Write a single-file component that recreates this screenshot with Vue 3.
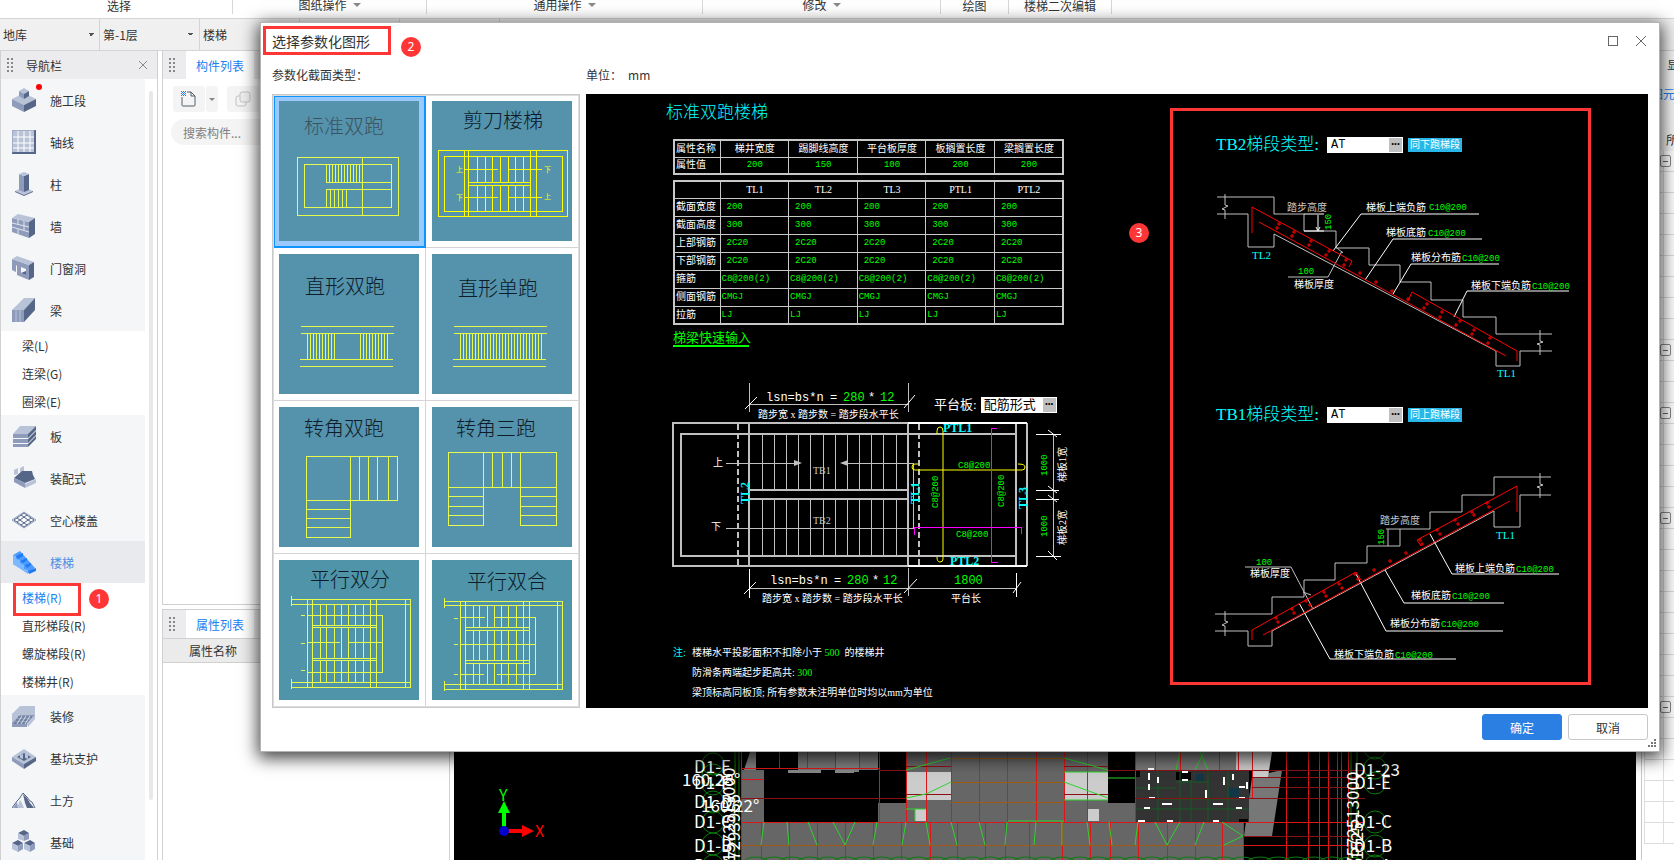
<template>
  <div class="app">
    <!-- Ribbon -->
    <header class="ribbon">
      <div v-for="g in ribbonGroups" :key="g.label" class="ribbon-group" :class="{ menu: g.menu }">
        <span>{{ g.label }}</span>
        <i v-if="g.menu" class="caret"></i>
      </div>
    </header>

    <div class="selector-bar">
      <select v-for="s in selectors" :key="s" class="selector" :aria-label="s">
        <option>{{ s }}</option>
      </select>
      <span class="selector-blank"></span>
      <span class="selector-blank"></span>
      <span class="selector-rest"></span>
    </div>

    <div class="workspace">
      <!-- Navigation -->
      <nav class="nav">
        <div class="panel-head">
          <i class="grip"></i>
          <span class="nav-title">导航栏</span>
          <button class="icon-button" aria-label="关闭导航栏">
            <svg width="10" height="10" viewBox="0 0 10 10"><path d="M1 1L9 9M9 1L1 9" stroke="#8a8a8a" fill="none" /></svg>
          </button>
        </div>
        <div class="nav-body">
          <div class="nav-list">
            <template v-for="item in navItems" :key="item.name">
              <button class="nav-item" :class="{ active: item.active }">
                <svg class="nav-icon" viewBox="0 0 24 24">
                  <path v-for="(p, i) in item.icon" :key="i" :d="p[1]" :fill="p[2] ? 'none' : p[0]" :stroke="p[2] ? p[0] : 'none'" :stroke-width="p[2]" />
                </svg>
                <span>{{ item.name }}</span>
                <i v-if="item.dot" class="red-dot"></i>
              </button>
              <div v-if="item.children" class="nav-children">
                <button v-for="(c, i) in item.children" :key="c" class="nav-child" :class="{ chosen: item.active && i === 0 }">
                  {{ c }}
                </button>
                <template v-if="item.active">
                  <i class="mark-box"></i>
                  <b class="badge badge-one">1</b>
                </template>
              </div>
            </template>
          </div>
          <i class="nav-scroll"></i>
        </div>
      </nav>

      <!-- Component and property lists -->
      <div class="side-panels">
        <section class="panel panel-top">
          <div class="panel-head">
            <i class="grip"></i>
            <button class="tab">构件列表</button>
          </div>
          <div class="list-tools">
            <button class="tool" aria-label="新建">
              <svg width="18" height="18" viewBox="0 0 18 18">
                <path d="M2 7V15Q2 16 3 16H14Q15 16 15 15V6L11 2H7M11 2V6H15" fill="none" stroke="#555c6a" />
                <path d="M1 1h1v1h-1zM3 1h1v1h-1zM5 1h1v1h-1zM2 2h1v1h-1zM4 2h1v1h-1zM1 3h1v1h-1zM3 3h1v1h-1zM5 3h1v1h-1zM2 4h1v1h-1zM4 4h1v1h-1zM1 5h1v1h-1zM3 5h1v1h-1zM5 5h1v1h-1z" fill="#1f7bf0" />
              </svg>
            </button>
            <button class="tool tool-narrow" aria-label="新建选项"><i class="caret"></i></button>
            <button class="tool tool-copy" aria-label="复制">
              <svg width="18" height="18" viewBox="0 0 18 18">
                <rect x="2" y="6" width="10" height="10" rx="2" fill="none" stroke="#c2c2c2" />
                <rect x="6" y="2" width="10" height="10" rx="2" fill="#eee" stroke="#c2c2c2" />
              </svg>
            </button>
          </div>
          <input class="search" type="text" placeholder="搜索构件..." aria-label="搜索构件" />
        </section>
        <section class="panel panel-bottom">
          <div class="panel-head">
            <i class="grip"></i>
            <button class="tab">属性列表</button>
          </div>
          <div class="prop-head">属性名称</div>
        </section>
      </div>

      <!-- Model view -->
      <main class="viewport">
        <svg class="model" viewBox="454 752 1182 108" preserveAspectRatio="xMinYMax meet">
          <g fill="#666">
            <path d="M741 770H764V822H741ZM741 822H1156V860H741ZM1156 822H1243V860H1156ZM878 803H906V822H878ZM906 752H1108V822H906ZM1108 803H1135V822H1108Z" />
            <path d="M750 752H756V770H744ZM835 752H859V772H835Z" fill="#808080" />
            <path d="M798 752H835V770H798ZM859 752H878V770H859ZM1135 752H1238V770H1135ZM1252 777L1282 770L1272 836H1244Z" fill="#777" />
            <path d="M788 770H804V773H788ZM804 770H821V773H804ZM835 770H854V773H835Z" fill="#888" />
            <path d="M906 772H951V800H906ZM1064 772H1108V800H1064ZM915 809H926V821H915ZM1088 809H1099V821H1088ZM1236 752H1272L1268 777H1252V770H1236Z" fill="#ccc" />
          </g>
          <path d="M1135 770H1249V823H1135Z" fill="#333" />
          <path d="M1135 771H1140V777H1135ZM1176 772H1191V780H1176ZM1239 819H1248V822H1239Z" fill="#000" />
          <path d="M1196 774H1204V781H1196ZM1228 788H1239V797H1228Z" fill="#123848" />
          <path d="M1158 770V823M1180 770V823M1191 780V823M1208 770V823M1228 770V823M1135 788H1176M1158 799H1239M1135 809H1249M1176 782H1208" stroke="#175a22" fill="none" />
          <path d="M1148 769h6M1149 773v7M1158 777v6M1149 784v6M1149 798h6M1182 772h6M1182 780h6M1206 790v8M1224 777v8M1233 774v6M1239 787h6M1247 782v7M1239 798h6M1144 808h6M1162 804h10M1213 804h10M1236 808h6M1138 821h7M1167 821h6M1213 821h6" stroke="#fff" stroke-width="2" />
          <g fill="none" stroke="#e0151a" shape-rendering="crispEdges">
            <path d="M741 752V860M779 752V768M807 752V768M835 752V770M859 752V768M879 752V822M906 752V822M926 752V822M951 752V822M979 752V822M1007 752V822M1036 752V822M1064 752V822M1087 752V822M1135 752V822M1155 752V770M1180 752V770M1219 752V770M1238 752V770M1252 752V798" />
            <path d="M761 822V860M789 822V860M817 822V860M845 822V860M873 822V860M901 822V860M930 822V860M957 822V860M985 822V860M1005 822V860M1029 822V860M1062 822V860M1090 822V860M1110 822V860M1138 822V860M1167 822V860M1195 822V860M1222 822V860M1243 822V860" />
            <path d="M741 768H879M741 779H764M741 822H1365M741 845H1365" />
            <path d="M1286 752V860M1308 752V860M1319 752V860M1328 752V860M1337 752V860M1341 752V860M1348 752V860" />
            <path d="M741 798H906M879 770H906M906 766H951M906 794H951M1064 766H1108M1064 794H1108M1108 770H1365M1252 777H1365M1252 787H1365M1135 798H1365M1243 836H1365" stroke="#8a1014" />
            <path d="M951 758H1064M951 782H1064M951 802H1064M741 845H1243" stroke="#a05a14" />
          </g>
          <path d="M906 770L950 758M906 798L926 794L951 782M906 809H926M915 809V821M1064 758L1108 770M1064 772H1108M1064 782L1108 798M1064 800H1108M1108 778H1135M1008 821H1064M764 822L761 845M787 822L789 845M808 822L817 845M833 822L845 845L855 822M877 822L873 845M906 822L902 845M926 822L930 845M951 822L957 845M979 822L985 845M1007 822L1005 845M1036 822L1034 845M1062 822L1062 845M1087 822L1090 845M1109 822L1112 845M1138 822L1135 845M1155 822L1167 845L1180 822M1204 822L1195 845M1222 822L1243 836L1224 845M1200 752L1208 770M1180 752L1176 770M1204 752L1195 770" fill="none" stroke="#2fd22f" />
          <g fill="none" stroke="#0a7d0a">
            <ellipse v-for="n in 34" :key="n" :cx="738 + n * 18" cy="863" rx="13" ry="6" />
            <circle v-for="y in [764, 775, 784, 802, 822, 844, 866]" :key="'l' + y" cx="713" :cy="y" r="11" />
            <circle v-for="y in [748, 768, 783, 822, 846, 866]" :key="'r' + y" cx="1375" :cy="y" r="11" />
            <path d="M735 752V860M739 752V860M1351 752V860M1357 752V860" />
          </g>
          <g class="axis-text">
            <text v-for="t in axisLabels" :key="t[0] + t[1] + t[2]" :x="t[1]" :y="t[2]">{{ t[0] }}</text>
            <text transform="translate(735 862) rotate(-90)">1572513000</text>
            <text transform="translate(740 860) rotate(-90)">7293955</text>
            <text transform="translate(1359 866) rotate(-90)">7572513000</text>
            <text transform="translate(1363 860) rotate(-90)">1525</text>
          </g>
          <path d="M504 831V812" stroke="#0f0" stroke-width="4" />
          <path d="M498 813L504 801L510 813Z" fill="#0f0" />
          <path d="M504 831H523" stroke="#f00" stroke-width="4" />
          <path d="M522 825L534 831L522 837Z" fill="#f00" />
          <circle cx="504" cy="831" r="5" fill="#00c" />
          <text class="axis" x="499" y="801" fill="#0f0">Y</text>
          <text class="axis" x="535" y="837" fill="#f00">X</text>
        </svg>
      </main>

      <aside class="right-panel">
        <div class="right-title">显示</div>
        <div class="right-tab">图元</div>
        <div class="right-filter">所有</div>
        <div class="right-grid">
          <div v-for="n in 33" :key="n" class="right-row">
            <i v-if="[1, 10, 13, 18, 27].includes(n)" class="minus"></i>
          </div>
        </div>
      </aside>
    </div>

    <!-- Parametric shape dialog -->
    <div class="dialog" role="dialog" aria-labelledby="dialog-title">
      <div class="dialog-head">
        <h1 id="dialog-title">选择参数化图形</h1>
        <button class="icon-button" aria-label="最大化">
          <svg width="12" height="12" viewBox="0 0 12 12"><rect x="1" y="1" width="9" height="9" fill="none" stroke="#666" shape-rendering="crispEdges" /></svg>
        </button>
        <button class="icon-button" aria-label="关闭">
          <svg width="12" height="12" viewBox="0 0 12 12"><path d="M1 1L11 11M11 1L1 11" fill="none" stroke="#666" /></svg>
        </button>
        <i class="title-box"></i>
        <b class="badge badge-two">2</b>
      </div>
      <div class="dialog-labels">
        <span class="label-type">参数化截面类型：</span>
        <span>单位：</span>
        <span class="unit">mm</span>
      </div>

      <div class="dialog-content">
        <div class="shape-list">
          <button
            v-for="(s, i) in shapes"
            :key="s.name"
            class="shape"
            :class="{ selected: selected === i }"
            @click="selected = i"
          >
            <svg viewBox="0 0 140 140" width="140" height="140">
              <rect width="140" height="140" :fill="i > 5 ? '#4f94a8' : '#5592ac'" />
              <path :d="s.d" fill="none" :stroke="i === 1 ? '#ffff00' : '#e6fa50'" shape-rendering="crispEdges" />
              <text :x="s.x" :y="s.y" class="shape-name">{{ s.name }}</text>
              <text v-for="m in s.marks" :key="m.join()" :x="m[1]" :y="m[2]" class="shape-mark">{{ m[0] }}</text>
            </svg>
          </button>
        </div>

        <div class="canvas">
          <div class="canvas-left">
            <h2>标准双跑楼梯</h2>
            <table class="cad-table center">
              <tbody>
                <tr>
                  <th>属性名称</th>
                  <th v-for="h in propNames" :key="h">{{ h }}</th>
                </tr>
                <tr>
                  <th>属性值</th>
                  <td v-for="(v, i) in propValues" :key="i">{{ v }}</td>
                </tr>
              </tbody>
            </table>
            <table class="cad-table beams">
              <thead>
                <tr>
                  <th></th>
                  <th v-for="b in beams" :key="b">{{ b }}</th>
                </tr>
              </thead>
              <tbody>
                <tr v-for="(r, i) in beamRows" :key="r[0]" :class="{ tight: i > 3 }">
                  <th>{{ r[0] }}</th>
                  <td v-for="b in beams" :key="b">{{ r[1] }}</td>
                </tr>
              </tbody>
            </table>
            <a class="quick-link" href="#">梯梁快速输入</a>

            <div class="plan">
              <svg class="plan-svg cad" width="417" height="226" viewBox="23 10 417 226">
                <g fill="none" stroke="#c0c0c0" shape-rendering="crispEdges">
                  <path d="M258 53H23V196H258M366 64H31V186H366M366 53V196M377 53V196M99 53V196M258 53V196M99 120H258M99 129H258" stroke-width="2" />
                  <path d="M88 54V196M269 54V196" stroke-width="2" stroke-dasharray="6 3" />
                  <path :d="planSteps" />
                  <path d="M76 93H150M192 93H263V158H76" />
                  <path d="M99 13V42M258 13V42M99 34H258M258 198V226M99 218H366M403 64V186" />
                </g>
                <path d="M258 53H377M258 196H377" stroke="#fff" stroke-width="2" shape-rendering="crispEdges" />
                <path d="M144 90L152 93L144 96ZM198 90L190 93L198 96Z" fill="#c0c0c0" />
                <g fill="none" stroke="#fff">
                  <path d="M95 39L107 27M254 38L265 25M94 224L106 212M254 223L267 209M363 223L371 212M398 60L407 67M398 116L407 123M398 125L407 132M398 181L407 190" />
                  <path d="M99 199V228M366 203V227M386 64H411M386 120H409M386 129H409M386 186H411" shape-rendering="crispEdges" />
                </g>
                <path d="M287 64V61Q287 57 290 57Q293 57 293 61V189Q293 192 290 192Q287 192 287 187M268 94H265Q262 94 262 97Q262 100 265 100H372Q375 100 375 97Q375 94 368 94" fill="none" stroke="#ff0" />
                <path d="M347 58H341V192H348M264 165V157H371V164" fill="none" stroke="#f0f" shape-rendering="crispEdges" />
                <g class="formula">
                  <text x="116" y="31">lsn=bs*n</text><text x="180" y="31">=</text>
                  <text class="green" x="193" y="31">280</text><text x="218" y="31">*</text><text class="green" x="230" y="31">12</text>
                  <text x="120" y="214">lsn=bs*n</text><text x="184" y="214">=</text>
                  <text class="green" x="197" y="214">280</text><text x="222" y="214">*</text><text class="green" x="233" y="214">12</text>
                  <text class="green" x="304" y="214">1800</text>
                </g>
                <text x="108" y="48">踏步宽 x 踏步数 = 踏步段水平长</text>
                <text x="112" y="232">踏步宽 x 踏步数 = 踏步段水平长</text>
                <text x="301" y="232">平台长</text>
                <text x="63" y="96">上</text>
                <text x="61" y="160">下</text>
                <text class="dim" x="163" y="104">TB1</text>
                <text class="dim" x="163" y="154">TB2</text>
                <g class="cyan bold">
                  <text x="293" y="62">PTL1</text>
                  <text x="300" y="195">PTL2</text>
                  <text transform="translate(99 134) rotate(-90)">TL2</text>
                  <text transform="translate(269 134) rotate(-90)">TL1</text>
                  <text transform="translate(377 139) rotate(-90)">TL3</text>
                </g>
                <g class="green code">
                  <text x="308" y="98">C8@200</text>
                  <text x="306" y="167">C8@200</text>
                  <text transform="translate(288 138) rotate(-90)">C8@200</text>
                  <text transform="translate(354 137) rotate(-90)">C8@200</text>
                  <text transform="translate(397 106) rotate(-90)">1000</text>
                  <text transform="translate(397 167) rotate(-90)">1000</text>
                </g>
                <text transform="translate(416 112) rotate(-90)">梯板1宽</text>
                <text transform="translate(416 175) rotate(-90)">梯板2宽</text>
              </svg>
              <label class="plan-field">
                平台板:
                <span class="combo"><input type="text" value="配筋形式" /><button aria-label="选择配筋形式">•••</button></span>
              </label>
            </div>

            <div class="notes">
              <p><span class="note-mark">注:</span>楼梯水平投影面积不扣除小于 <em>500</em>&nbsp; 的楼梯井</p>
              <p><span class="note-mark"></span>防滑条两端起步距高共: <em>300</em></p>
              <p><span class="note-mark"></span>梁顶标高同板顶; 所有参数未注明单位时均以mm为单位</p>
            </div>
            <b class="badge badge-three">3</b>
          </div>

          <div class="canvas-right">
            <div v-for="f in flights" :key="f.code" class="flight">
              <div class="flight-head">
                <label :for="f.code">{{ f.code }}梯段类型:</label>
                <span class="combo"><input :id="f.code" class="mono" type="text" value="AT" /><button aria-label="选择梯段类型">•••</button></span>
                <button class="same">{{ f.same }}</button>
              </div>
              <svg class="cad" width="415" :height="f.h" :viewBox="'8 ' + f.top + ' 415 ' + f.h">
                <path :d="f.slab" fill="none" stroke="#c0c0c0" />
                <path :d="f.leaders" fill="none" stroke="#fff" />
                <path :d="f.bars" fill="none" stroke="#f00" />
                <path :d="crosses(f.dots)" fill="none" stroke="#f00" />
                <text v-for="l in f.labels" :key="l.join()" :x="l[1]" :y="l[2]" :class="l[3]">{{ l[0] }}</text>
                <text class="green code" :transform="'translate(' + f.rise + ') rotate(-90)'">150</text>
              </svg>
            </div>
          </div>
        </div>
      </div>

      <footer class="dialog-foot">
        <button class="primary">确定</button>
        <button>取消</button>
        <svg class="resizer" width="9" height="9" viewBox="0 0 9 9">
          <path d="M6 0h2v2h-2zM6 3h2v2h-2zM3 3h2v2h-2zM6 6h2v2h-2zM3 6h2v2h-2zM0 6h2v2h-2z" fill="#777" />
        </svg>
      </footer>
    </div>
  </div>
</template>

<script setup>
import { ref } from 'vue';

const selected = ref(0);

const ribbonGroups = [
  { label: '选择' },
  { label: '图纸操作', menu: true },
  { label: '通用操作', menu: true },
  { label: '修改', menu: true },
  { label: '绘图' },
  { label: '楼梯二次编辑' }
];
const selectors = ['地库', '第-1层', '楼梯'];

// --- Navigation tree, icons are [color, path, strokeWidth] ---
const L = '#b9c3d8';
const M = '#8e9bba';
const D = '#566688';
const navItems = [
  { name: '施工段', dot: true, icon: [[L, 'M0 11L12 5L24 11L12 17Z'], [M, 'M0 11L12 17V24L0 18Z'], [D, 'M24 11L12 17V24L24 18Z'], [L, 'M7 3L12 0L17 3L12 6Z'], [M, 'M7 3L12 6V11L7 8Z'], [D, 'M17 3L12 6V11L17 8Z']] },
  { name: '轴线', icon: [[L, 'M0 0H23V23H0Z'], ['#fff', 'M6 1V22M12 1V22M18 1V22M1 7H22M1 13H22M1 18H22', 1], [D, 'M23 0V23H0', 2], [M, 'M0 23V0H23', 1]] },
  { name: '柱', icon: [[L, 'M3 19L12 15L21 19L12 23Z'], [D, 'M3 19L12 23L21 19V20L12 24L3 20Z'], [M, 'M7 2L12 4V20L7 18Z'], [D, 'M17 2L12 4V20L17 18Z'], [L, 'M7 2L12 0L17 2L12 4Z']] },
  { name: '墙', icon: [[M, 'M0 4L17 8V24L0 18Z'], [L, 'M0 4L6 0L23 4L17 8Z'], [D, 'M17 8L23 4V20L17 24Z'], ['#dfe4ee', 'M0 9L17 13M0 13L17 18M6 5V10M12 11V16M6 15V20M12 7V11', 1]] },
  { name: '门窗洞', icon: [[M, 'M0 3L17 9V24L5 19V10L4 9V16L0 14ZM9 11V17L14 19V13Z'], [L, 'M0 3L5 0L22 6L17 9Z'], [D, 'M17 9L22 6V21L17 24ZM9 17L14 15V19Z']] },
  { name: '梁', icon: [[L, 'M0 12L12 0H23L12 12Z'], [M, 'M0 12H12V24H0Z'], [D, 'M12 12L23 0V12L12 24Z'], [L, 'M4 12V24M8 12V24', 1]], children: ['梁(L)', '连梁(G)', '圈梁(E)'] },
  { name: '板', icon: [[L, 'M1 10L8 2H24L16 10Z'], [M, 'M1 10H16V14H1ZM1 15H16V19H1ZM1 20H16V23H1Z'], [D, 'M16 10L24 2V6L16 14ZM16 15L24 7V11L16 19ZM16 20L24 12V15L16 23Z']] },
  { name: '装配式', icon: [[L, 'M2 4L6 2V8L2 9ZM8 2L12 0V6L8 7Z'], [D, 'M2 12L10 5H20L21 9L23 13L13 17Z'], [M, 'M2 12L13 17V22L2 16Z'], [L, 'M13 18L24 13V17L13 22Z']] },
  { name: '空心楼盖', icon: [[D, 'M2 12L12 5L22 12L12 19ZM5 10L15 17M9 7L19 14M15 7L5 14M19 10L9 17', 1], [M, 'M0 12L12 20L24 12M0 12L12 4L24 12', 1]] },
  { name: '楼梯', active: true, icon: [['#4d9bff', 'M1 5L8 1L23 18L16 23L1 14Z'], ['#7db8ff', 'M1 5V14L16 24V20L12 19V15L8 13V10L4 9V6Z'], ['#1f7bf0', 'M4 6L11 3V6L6 9ZM8 11L15 8V10L11 13ZM13 15L19 13V15L15 18ZM16 21L24 18V21L17 24Z']], children: ['楼梯(R)', '直形梯段(R)', '螺旋梯段(R)', '楼梯井(R)'] },
  { name: '装修', icon: [[L, 'M0 10L8 2H23V12H8L0 20Z'], [M, 'M0 19L8 11H23L15 20V23H0Z'], [L, 'M15 20L23 11V15L16 23Z'], [D, 'M6 13H20M4 16H17M2 19H15', 1], ['#dfe4ee', 'M10 12L5 20M14 12L9 20M18 12L13 20', 1]] },
  { name: '基坑支护', icon: [[L, 'M0 11L12 3L24 11L12 18Z'], [M, 'M0 11L12 18V23L0 15Z'], [D, 'M24 11L12 18V23L24 15Z'], [D, 'M5 11L12 7L19 11L12 15Z'], [L, 'M8 9L11 8V13L8 12ZM13 7L16 8V13L13 12Z']] },
  { name: '土方', icon: [[D, 'M0 20L5 13L7 11L11 5L15 9L18 13L20 14L23 20', 1], [L, 'M5 20L8 12L10 15L12 20Z'], [D, 'M11 6L15 10L18 15L22 20H15L13 15Z'], [M, 'M1 20L5 14L6 20Z']] },
  { name: '基础', icon: [[D, 'M6 3L12 0L17 3L12 6ZM0 13L6 10L11 13L6 16ZM12 13L18 10L23 13L18 16Z'], [L, 'M6 3L12 6V11L6 9ZM0 13L6 16V22L0 19ZM12 13L18 16V22L12 19Z'], [M, 'M17 3L12 6V11L17 9ZM11 13L6 16V22L11 19ZM23 13L18 16V22L23 19Z']] }
];

// --- Shape thumbnails ---
const steps = (xs, y1, y2) => xs.map((x) => `M${x} ${y1}V${y2}`).join('');
const range = (from, to, by) => {
  const out = [];
  for (let x = from; x <= to; x += by) out.push(x);
  return out;
};
const railing = 'M22 72H115M22 79H115M21 105H114M21 112H114';

const shapes = [
  { name: '标准双跑', x: 25, y: 33, d: 'M18 56H119V114H18ZM25 63H112V106H25ZM83 56V114M47 81H112M47 88H112' + steps(range(47, 80, 3), 63, 81) + steps(range(47, 69, 4), 88, 106) },
  {
    name: '剪刀楼梯', x: 31, y: 27,
    d: 'M6 49H135V115H6ZM12 55H130V110H12ZM32 49V115M36 49V115M98 49V115M104 49V115M36 81H98M36 84H98M32 68H66M76 68H110M32 96H66M76 96H110' + steps([45, 53, 60, 68, 76, 83, 91], 55, 81) + steps([45, 53, 60, 68, 76, 83, 91], 84, 110),
    marks: [['上', 24, 71], ['下', 112, 71], ['下', 24, 99], ['上', 112, 98]]
  },
  { name: '直形双跑', x: 26, y: 40, d: railing + steps(range(28, 56, 3), 79, 105) + steps(range(81, 109, 3), 79, 105) },
  { name: '直形单跑', x: 26, y: 42, d: railing + steps(range(28, 109, 3), 79, 105) },
  { name: '转角双跑', x: 25, y: 29, d: 'M27 49H118V93H27ZM27 93V130H71V49M27 102H71M27 111H71M27 120H71' + steps([80, 89, 98, 109], 49, 93) },
  { name: '转角三跑', x: 24, y: 29, d: 'M16 45H124V118H88V45M16 45V118H51V45M16 80H124M16 89H51M16 99H51M16 108H51M88 89H124M88 99H124M88 108H124' + steps([60, 70, 79], 45, 80) },
  { name: '平行双分', x: 31, y: 27, d: 'M12 39H131V127H12M12 44H131M12 122H131M28 39V127M33 39V127M91 39V127M97 39V127M126 39V127M28 55H103V112H28M28 82H61M69 82H103M33 65H97M33 67H97M33 98H97M33 100H97M12 36V46M12 119V129M22 55h4M22 83h4M22 110h4' + steps([41, 47, 55, 62, 69, 76, 84], 44, 65) + steps([41, 47, 55, 62, 69, 76, 84], 67, 98) + steps([41, 47, 55, 62, 69, 76, 84], 100, 122) },
  { name: '平行双合', x: 35, y: 29, d: 'M12 41H130V129H12M12 45H130M12 124H130M28 41V129M33 41V129M91 41V129M97 41V129M125 41V129M28 57H53M63 57H103V114H65M28 114H52M28 84H103M33 67H97M33 70H97M33 100H97M33 103H97M12 38V48M12 121V131M22 58h4M22 84h4M22 114h4' + steps([41, 47, 55, 62, 69, 76, 84], 45, 67) + steps([41, 47, 55, 62, 69, 76, 84], 70, 100) + steps([41, 47, 55, 62, 69, 76, 84], 103, 124) }
];

// --- Parameter tables ---
const propNames = ['梯井宽度', '踢脚线高度', '平台板厚度', '板搁置长度', '梁搁置长度'];
const propValues = [200, 150, 100, 200, 200];
const beams = ['TL1', 'TL2', 'TL3', 'PTL1', 'PTL2'];
const beamRows = [
  ['截面宽度', '200'],
  ['截面高度', '300'],
  ['上部钢筋', '2C20'],
  ['下部钢筋', '2C20'],
  ['箍筋', 'C8@200(2)'],
  ['侧面钢筋', 'CMGJ'],
  ['拉筋', 'LJ']
];

const planXs = [112, 124, 136, 148, 160, 173, 185, 197, 209, 221, 233, 246];
const planSteps = steps(planXs, 64, 119) + steps(planXs, 129, 186);

// --- Flight sections ---
const crosses = (pts) => pts.map(([x, y]) => `M${x - 2} ${y}h4M${x} ${y - 2}v4`).join('');

const flights = [
  {
    code: 'TB2', same: '同下跑梯段', top: 55, h: 250, rise: '166 130',
    slab: 'M52 97H109V114H139V131H171V148H204V165H235V182H266V200H298V217H331V234H387M52 114H83V147H109V134L331 251V266H355V251H387M60 94V105L63 106L57 109L60 110V119M375 230V241L378 242L372 244L375 245V255M123 177H163L177 151M172 148L178 153',
    leaders: 'M168 151L196 114H314M200 180L228 139H317M228 194L246 164H334M289 217L302 191H404M139 114H159M139 131H159M153 115V130M151 127L153 131L155 127',
    bars: 'M87 133V107L187 161L184 167M94 122L341 256M243 201L247 192L352 251V261',
    dots: [[114, 124], [112, 128], [129, 132], [127, 136], [146, 141], [144, 145], [164, 151], [161, 155], [181, 160], [179, 165], [195, 173], [211, 182], [227, 191], [243, 199], [262, 204], [259, 208], [277, 212], [275, 217], [295, 221], [291, 225], [309, 230], [307, 234], [325, 238], [323, 243]],
    labels: [
      ['踏步高度', 122, 111, 'dim'], ['梯板上端负筋', 201, 111], ['C10@200', 264, 110, 'green code'],
      ['梯板底筋', 221, 136], ['C10@200', 263, 136, 'green code'],
      ['梯板分布筋', 246, 161], ['C10@200', 297, 161, 'green code'],
      ['梯板下端负筋', 306, 189], ['C10@200', 367, 189, 'green code'],
      ['100', 133, 174, 'green code'], ['梯板厚度', 129, 188], ['TL2', 87, 159, 'cyan t11'], ['TL1', 332, 277, 'cyan t11']
    ]
  },
  {
    code: 'TB1', same: '同上跑梯段', top: 35, h: 257, rise: '219 155',
    slab: 'M50 224H107V207H139V190H170V173H202V156H235V139H265V122H297V105H329V87H386M50 241H83V256H107V241L329 121V137H355V105H386M60 221V231L63 232L57 235L60 236V246M375 83V94L378 95L372 97L375 98V108M80 177H126L148 219M138 202L146 205M221 139H235M223 139V156',
    leaders: 'M265 144L287 184H394M220 180L239 213H339M191 184L221 241H338M134 213L165 269H291',
    bars: 'M87 250V240L191 182L196 190M98 245L345 111M256 156L252 150L352 96V122',
    dots: [[111, 228], [113, 232], [127, 219], [129, 223], [141, 211], [145, 215], [159, 202], [161, 206], [174, 194], [177, 198], [190, 184], [193, 189], [209, 180], [225, 171], [241, 163], [255, 150], [257, 154], [272, 140], [275, 144], [290, 130], [293, 134], [307, 122], [309, 125], [322, 113], [324, 117]],
    labels: [
      ['踏步高度', 215, 134, 'dim'], ['梯板上端负筋', 290, 182], ['C10@200', 351, 182, 'green code'],
      ['梯板底筋', 246, 209], ['C10@200', 287, 209, 'green code'],
      ['梯板分布筋', 225, 237], ['C10@200', 276, 237, 'green code'],
      ['梯板下端负筋', 169, 268], ['C10@200', 230, 268, 'green code'],
      ['100', 91, 175, 'green code'], ['梯板厚度', 85, 187], ['TL1', 331, 149, 'cyan t11']
    ]
  }
];

const axisLabels = [
  ['D1-F', 694, 773], ['D1-E', 694, 789], ['D1-D', 694, 808], ['D1-C', 694, 828], ['D1-B', 694, 852], ['D1-A', 694, 872],
  ['160.28°', 682, 786], ['160.22°', 701, 812],
  ['D1-23', 1354, 776], ['D1-E', 1354, 789], ['D1-C', 1354, 828], ['D1-B', 1354, 852], ['D1-A', 1354, 872]
];
</script>

<style>
body {
  overflow: hidden;
}
</style>

<style scoped>
.app {
  position: relative;
  display: flex;
  flex-direction: column;
  height: 100vh;
  overflow: hidden;
  background: #fff;
  color: #333;
  font-family: "Noto Sans CJK SC", sans-serif;
  font-size: 12px;
}
.app * {
  box-sizing: border-box;
}
button, input, select {
  font: inherit;
  color: inherit;
  border: none;
  background: none;
  padding: 0;
  margin: 0;
}
button {
  cursor: pointer;
}
.caret {
  border: 4px solid transparent;
  border-top-color: #888;
  border-bottom: none;
}

/* --- Ribbon --- */
.ribbon {
  display: grid;
  grid-template-columns: 233px 194px 276px 238px 68px 103px;
  height: 18px;
  flex: none;
}
.ribbon-group {
  display: flex;
  justify-content: center;
  align-items: center;
  gap: 6px;
  height: 14px;
  padding-bottom: 2px;
  line-height: 12px;
  border-right: 1px solid #d8d8d8;
}
.ribbon-group.menu {
  padding-bottom: 4px;
}
.ribbon-group:first-child {
  padding-left: 6px;
}
.selector-bar {
  display: flex;
  flex: none;
  height: 33px;
  background: #f0f0f0;
  border-top: 1px solid #d4d4d4;
  border-bottom: 1px solid #d4d4d4;
}
.selector, .selector-blank {
  width: 100px;
  padding-left: 3px;
  border-right: 1px solid #d4d4d4;
}
.selector {
  appearance: none;
  border-radius: 0;
  background:
    linear-gradient(45deg, transparent 50%, #555 50%) no-repeat 88px 14px / 3px 3px,
    linear-gradient(-45deg, transparent 50%, #555 50%) no-repeat 91px 14px / 3px 3px;
}
.selector-rest {
  flex: 1;
}

/* --- Panels --- */
.workspace {
  display: flex;
  flex: 1;
  min-height: 0;
}
.panel-head {
  display: flex;
  align-items: center;
  flex: none;
  height: 28px;
  background: #ececee;
}
.grip {
  width: 8px;
  height: 16px;
  margin: 0 10px 0 5px;
  background: radial-gradient(circle, #888 1px, transparent 1px) 0 0 / 4px 4px;
}
.icon-button {
  display: flex;
  padding: 0;
}
.nav {
  display: flex;
  flex-direction: column;
  width: 158px;
  flex: none;
  border: 1px solid #d0d0d0;
  border-width: 0 1px;
}
.nav-title {
  flex: 1;
  padding-left: 2px;
}
.nav .panel-head {
  padding-right: 9px;
}
.nav-body {
  display: flex;
  flex: 1;
  min-height: 0;
}
.nav-list {
  width: 144px;
  flex: none;
}
.nav-scroll {
  width: 4px;
  height: 709px;
  margin: 12px 0 0 4px;
  border-radius: 2px;
  background: #e8e8e8;
}
.nav-item {
  position: relative;
  display: flex;
  align-items: center;
  gap: 14px;
  width: 100%;
  height: 42px;
  padding-left: 11px;
  background: #f5f6f8;
}
.nav-item.active {
  background: #e9eaee;
  color: #4f8de0;
}
.nav-icon {
  width: 24px;
  height: 24px;
}
.red-dot {
  position: absolute;
  left: 35px;
  top: 5px;
  width: 6px;
  height: 6px;
  border-radius: 50%;
  background: #f00;
}
.nav-children {
  position: relative;
}
.nav-child {
  display: block;
  width: 100%;
  height: 28px;
  padding-left: 21px;
  text-align: left;
}
.nav-child.chosen {
  color: #2080f0;
}
.side-panels {
  display: flex;
  flex-direction: column;
  gap: 4px;
  width: 288px;
  flex: none;
  margin-left: 4px;
}
.panel {
  border: 1px solid #d0d0d0;
}
.panel-top {
  height: 554px;
  border-top: none;
}
.panel-bottom {
  flex: 1;
  border-bottom: none;
}
.tab {
  height: 28px;
  padding: 0 10px;
  background: #fff;
  color: #2080f0;
}
.list-tools {
  display: flex;
  gap: 1px;
  padding: 7px 10px;
}
.tool {
  display: flex;
  align-items: center;
  justify-content: center;
  width: 32px;
  height: 26px;
  border-radius: 3px;
  background: #f4f4f4;
}
.tool-narrow {
  width: 12px;
}
.tool-narrow .caret {
  border-width: 3px 3px 0;
}
.tool-copy {
  margin-left: 8px;
}
.search {
  width: 260px;
  height: 26px;
  margin-left: 8px;
  padding-left: 12px;
  border-radius: 13px;
  background: #f4f4f4;
}
.search::placeholder {
  color: #808080;
}
.prop-head {
  height: 25px;
  padding-left: 26px;
  line-height: 24px;
  background: #ebebeb;
  border: 1px solid #d0d0d0;
  border-width: 1px 0;
}

/* --- Model view --- */
.viewport {
  display: flex;
  align-items: flex-end;
  flex: 1;
  margin-left: 4px;
  background: #000;
  overflow: hidden;
}
.model {
  width: 100%;
}
.axis-text {
  fill: #fff;
  font-size: 17px;
}
.axis {
  font-size: 16px;
}
.right-panel {
  width: 33px;
  flex: none;
  margin-left: 5px;
  padding-left: 2px;
  border-left: 1px solid #c4c8d0;
  overflow: hidden;
}
.right-title, .right-tab, .right-filter {
  padding-left: 23px;
  white-space: nowrap;
  background: #f4f4f4;
}
.right-title {
  height: 28px;
  line-height: 28px;
}
.right-tab {
  height: 29px;
  padding-left: 7px;
  line-height: 29px;
  color: #2080f0;
}
.right-filter {
  height: 43px;
  padding: 21px 0 0 22px;
  line-height: 22px;
}
.right-row {
  display: flex;
  align-items: center;
  height: 21px;
  padding-left: 15px;
  border-bottom: 1px solid #ddd;
  border-left: 1px solid #ddd;
  background: linear-gradient(#ddd, #ddd) no-repeat 18px 0 / 1px 100%;
}
.minus {
  width: 11px;
  height: 12px;
  border: 1px solid #888;
  border-radius: 2px;
  background: linear-gradient(#666, #666) no-repeat center / 5px 1px, #fff;
}

/* --- Dialog --- */
.dialog {
  position: absolute;
  top: 22px;
  left: 260px;
  right: 14px;
  background: #fff;
  border: 1px solid #b4b4b4;
  box-shadow: 0 4px 16px 2px rgba(0, 0, 0, 0.75);
}
.dialog-head {
  position: relative;
  display: flex;
  align-items: center;
  gap: 16px;
  height: 39px;
  padding: 0 12px 3px 11px;
}
.dialog-head h1 {
  flex: 1;
  margin: 0;
  font-size: 14px;
  font-weight: 400;
}
.dialog-labels {
  display: flex;
  height: 32px;
  padding-left: 11px;
  line-height: 26px;
}
.label-type {
  width: 314px;
}
.unit {
  padding-left: 6px;
}
.dialog-content {
  display: flex;
  gap: 6px;
  padding: 0 11px;
}
.shape-list {
  display: grid;
  grid-template-columns: 153px 153px;
  flex: none;
  width: 308px;
  border: 1px solid #c8c8c8;
  outline: 1px solid #ddd;
  outline-offset: -2px;
}
.shape {
  display: flex;
  justify-content: center;
  align-items: center;
  height: 153px;
  border-right: 1px solid #d4d4d4;
  border-bottom: 1px solid #d4d4d4;
}
.shape.selected {
  padding: 0 1px 1px 0;
  border: 2px solid #0f94ff;
  background: #99c9ff;
}
.shape-name {
  font-size: 20px;
  font-weight: 300;
  fill: #0c1c28;
}
.selected .shape-name {
  fill: #3c5260;
}
.shape-mark {
  font-size: 7px;
  fill: #ff0;
}
.dialog-foot {
  display: flex;
  justify-content: flex-end;
  gap: 6px;
  position: relative;
  padding: 6px 11px 11px;
}
.dialog-foot button {
  width: 80px;
  height: 26px;
  border: 1px solid #c8c8c8;
  border-radius: 3px;
}
.dialog-foot .primary {
  background: #2c7fe2;
  border-color: #2c7fe2;
  color: #fff;
}
.resizer {
  position: absolute;
  right: 2px;
  bottom: 3px;
}

/* --- Drawing canvas --- */
.canvas {
  display: flex;
  justify-content: space-between;
  flex: 1;
  height: 614px;
  background: #000;
  color: #fff;
  font-family: "Liberation Serif", "Noto Sans CJK SC", serif;
  font-size: 10px;
}
.canvas-left {
  position: relative;
  padding: 9px 0 0 87px;
}
.canvas-left h2 {
  margin: 0 0 16px -7px;
  font-size: 17px;
  font-weight: 300;
  line-height: 20px;
  color: #0ff;
}
.cad-table {
  width: 391px;
  table-layout: fixed;
  border-collapse: collapse;
  border: 2px solid #c8c8c8;
  line-height: 14px;
}
.cad-table th, .cad-table td {
  height: 17px;
  padding: 0 0 0 1px;
  border: 1px solid #c8c8c8;
  font-weight: 400;
  white-space: nowrap;
}
.cad-table th:first-child {
  width: 46px;
  text-align: left;
}
.cad-table td, .code {
  font-family: "Liberation Mono", monospace;
  font-size: 9px;
}
.cad-table td {
  color: #0f0;
}
.center td {
  text-align: center;
}
.beams {
  margin-top: 5px;
}
.beams tbody td {
  height: 18px;
  padding-left: 6px;
}
.beams .tight td {
  padding-left: 1px;
}
.quick-link {
  display: block;
  width: 76px;
  margin: 5px 0 33px;
  font-size: 13px;
  line-height: 15px;
  white-space: nowrap;
  color: #0f0;
  text-decoration: none;
  border-bottom: 2px solid #0f0;
}
.plan {
  position: relative;
  height: 226px;
}
.cad {
  display: block;
  overflow: visible;
  fill: #fff;
}
.green {
  fill: #0f0;
}
.cyan {
  fill: #0ff;
}
.dim {
  fill: #c8c8c8;
}
.bold {
  font-size: 12px;
  font-weight: 700;
}
.t11 {
  font-size: 11px;
}
.formula {
  font-family: "Liberation Mono", monospace;
  font-size: 12px;
}
.plan-field {
  position: absolute;
  left: 261px;
  top: 17px;
  display: flex;
  align-items: center;
  gap: 4px;
  font-size: 13px;
  line-height: 16px;
  white-space: nowrap;
}
.combo {
  display: flex;
  width: 76px;
  height: 16px;
  padding: 1px;
  background: #fff;
  color: #000;
}
.combo input {
  flex: 1;
  min-width: 0;
  padding-left: 2px;
  font-size: 13px;
  line-height: 14px;
}
.combo .mono {
  padding-left: 3px;
  font-family: "Liberation Mono", monospace;
  font-size: 12px;
}
.combo button {
  width: 13px;
  background: #c0c0c0;
  font-size: 8px;
  line-height: 8px;
  text-align: center;
}
.notes {
  margin-top: 37px;
}
.notes p {
  display: flex;
  margin: 0;
  line-height: 20px;
  white-space: pre;
}
.notes em {
  font-style: normal;
  color: #0f0;
}
.note-mark {
  width: 19px;
  color: #0ff;
}
.canvas-right {
  height: 577px;
  margin: 14px 57px 0 0;
  padding-top: 24px;
  border: 3px solid #ff3636;
}
.flight-head {
  display: flex;
  align-items: center;
  height: 20px;
  padding-left: 43px;
}
.flight-head label {
  width: 111px;
  font-size: 17px;
  font-weight: 300;
  line-height: 20px;
  white-space: nowrap;
  color: #0ff;
}
.same {
  width: 54px;
  height: 14px;
  margin-left: 5px;
  background: #29b6e8;
  color: #fff;
  font-size: 10px;
  line-height: 14px;
  white-space: nowrap;
}

/* --- Step marks --- */
.badge {
  position: absolute;
  width: 20px;
  height: 20px;
  border-radius: 50%;
  background: #ff3636;
  color: #fff;
  font-family: "Noto Sans", sans-serif;
  font-size: 12px;
  font-weight: 400;
  line-height: 20px;
  text-align: center;
}
.badge-one {
  left: 88px;
  top: 6px;
}
.badge-two {
  left: 140px;
  top: 14px;
}
.badge-three {
  left: 543px;
  top: 129px;
}
.mark-box, .title-box {
  position: absolute;
  border: 3px solid #ff3636;
}
.mark-box {
  left: 12px;
  top: 0;
  width: 68px;
  height: 33px;
}
.title-box {
  left: 2px;
  top: 3px;
  width: 128px;
  height: 29px;
}
</style>
